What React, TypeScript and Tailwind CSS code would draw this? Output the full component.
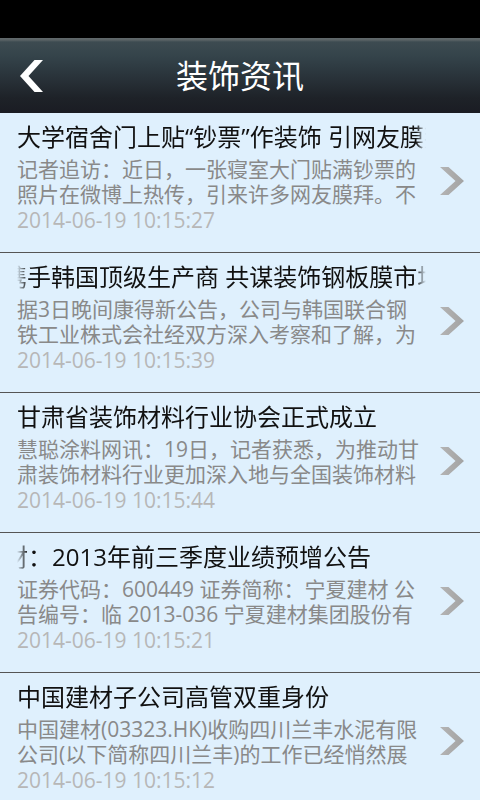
import React from "react";

type Item = {
  title: string;
  offset?: number;
  fadeLeft?: boolean;
  lines: [string, string];
  date: string;
};

const items: Item[] = [
  {
    title: "大学宿舍门上贴“钞票”作装饰 引网友膜拜",
    lines: ["记者追访：近日，一张寝室大门贴满钞票的", "照片在微博上热传，引来许多网友膜拜。不"],
    date: "2014-06-19 10:15:27",
  },
  {
    title: "携手韩国顶级生产商 共谋装饰钢板膜市场",
    offset: -14,
    fadeLeft: true,
    lines: ["据3日晚间康得新公告，公司与韩国联合钢", "铁工业株式会社经双方深入考察和了解，为"],
    date: "2014-06-19 10:15:39",
  },
  {
    title: "甘肃省装饰材料行业协会正式成立",
    lines: ["慧聪涂料网讯：19日，记者获悉，为推动甘", "肃装饰材料行业更加深入地与全国装饰材料"],
    date: "2014-06-19 10:15:44",
  },
  {
    title: "材：2013年前三季度业绩预增公告",
    offset: -13,
    fadeLeft: true,
    lines: ["证券代码：600449 证券简称：宁夏建材 公", "告编号：临 2013-036 宁夏建材集团股份有"],
    date: "2014-06-19 10:15:21",
  },
  {
    title: "中国建材子公司高管双重身份",
    lines: ["中国建材(03323.HK)收购四川兰丰水泥有限", "公司(以下简称四川兰丰)的工作已经悄然展"],
    date: "2014-06-19 10:15:12",
  },
];

function Chevron() {
  return (
    <svg width="24" height="28" viewBox="0 0 24 28" className="block">
      <defs>
        <linearGradient id="chev" x1="0" y1="0" x2="1" y2="0">
          <stop offset="0" stopColor="#b4b4b4" />
          <stop offset="1" stopColor="#a3a3a3" />
        </linearGradient>
      </defs>
      <polygon points="0,0 8.5,0 24,14 8.5,28 0,28 15.5,14" fill="url(#chev)" />
    </svg>
  );
}

function BackArrow() {
  return (
    <svg width="23" height="32" viewBox="0 0 23 32" className="block">
      <polygon points="14.5,0 23,0 8.5,16 23,32 14.5,32 0,16" fill="#ffffff" />
    </svg>
  );
}

function Row({ item }: { item: Item }) {
  return (
    <div className="flex h-[140px] items-start border-b border-[#555555]">
      <div className="w-[426px] shrink-0 pl-[17px] pt-[10px]">
        <div
          className={
            item.fadeLeft
              ? "h-[28px] w-[409px] overflow-hidden whitespace-nowrap text-[24px] leading-[28px] text-[#111111] [mask-image:linear-gradient(to_right,transparent_0px,black_11px,black_399px,transparent_409px)]"
              : "h-[28px] w-[409px] overflow-hidden whitespace-nowrap text-[24px] leading-[28px] text-[#111111] [mask-image:linear-gradient(to_right,black_0px,black_399px,transparent_409px)]"
          }
        >
          <span className="inline-block" style={item.offset ? { marginLeft: item.offset } : undefined}>
            {item.title}
          </span>
        </div>
        <div className="mt-[6px] text-[21px] leading-[25px] text-[#898989]">
          <div className="overflow-hidden whitespace-nowrap">{item.lines[0]}</div>
          <div className="overflow-hidden whitespace-nowrap">{item.lines[1]}</div>
        </div>
        <div className="mt-[2px] whitespace-nowrap text-[21px] leading-[23px] text-[#b7b7b7]">{item.date}</div>
      </div>
      <div className="ml-[14px] mt-[54px]">
        <Chevron />
      </div>
    </div>
  );
}

export default function App() {
  return (
    <div
      className="h-[800px] w-[480px] overflow-hidden bg-[#dff0fd]"
      style={{ fontFamily: '"Open Sans", "Noto Sans CJK SC", sans-serif' }}
    >
      <div className="h-[38px] bg-black" />
      <div className="grid h-[75px] grid-cols-[1fr_auto_1fr] items-center bg-[linear-gradient(to_bottom,#62696c_0px,#5a6265_2px,#3d4b51_4px,#34434a_25%,#283138_55%,#1e2228_80%,#1a1c23_100%)]">
        <div className="pl-[20px]">
          <BackArrow />
        </div>
        <div className="text-[32px] leading-[40px] text-white">装饰资讯</div>
        <div />
      </div>
      <div className="flex flex-col">
        {items.map((it, i) => (
          <Row key={i} item={it} />
        ))}
      </div>
    </div>
  );
}
